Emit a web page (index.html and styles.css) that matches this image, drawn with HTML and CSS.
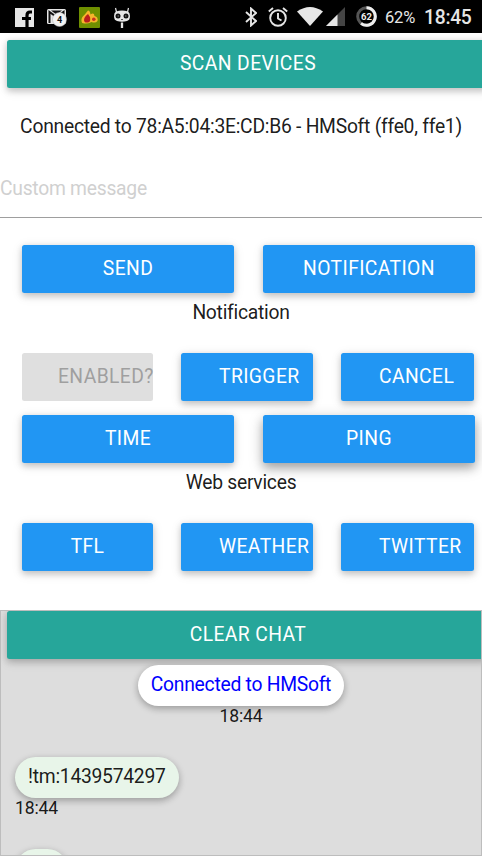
FILE: index.html
```html
<!DOCTYPE html>
<html lang="en">
<head>
<meta charset="utf-8">
<title>BLE messenger</title>
<link rel="stylesheet" href="styles.css">
</head>
<body>
<header class="status">
  <div class="status-left">
    <svg width="19" height="19" viewBox="0 0 19 19"><path fill="#e6e6e6" d="M0 0h19v19H0z"/><path d="M17 4h-2q-3 0-3 3.500V19M7 10.500h9" fill="none" stroke="#000" stroke-width="3.200"/></svg>
    <svg width="20" height="19" viewBox="0 0 20 19"><rect y="1" width="19" height="15" rx="1.500" fill="#e6e6e6"/><path d="M2.500 15V4l7 5 7-5v5" fill="none" stroke="#111" stroke-width="2"/><path d="M4 2.500h11l-5.500 4z" fill="#111"/><circle cx="12.500" cy="11.500" r="7" fill="#f2f2f2" stroke="#aaa" stroke-width=".5"/><text class="mail-count" x="12.500" y="14.500" text-anchor="middle">4</text></svg>
    <svg width="21" height="21" viewBox="0 0 21 21"><rect width="21" height="21" rx="1" fill="#6f8f00"/><path d="M2.500 14C2 10 5 9 9 3.500q2 0 2.500 4Q15 5 15.500 9q4 1 3 5-2 2.500-6 1-4 2-7 1.500-3 0-3-2.500z" fill="#f6b52c"/><path d="M5 13q0-3 4-6l2 3q1 5-2 5.500-4 .5-4-2.500z" fill="#b9201d"/><circle cx="14.800" cy="12.300" r="1.800" fill="#c83220"/></svg>
    <svg width="18" height="21" viewBox="0 0 18 21"><path d="M3.500 5 2.500 1M14.500 5l1-4" stroke="#e6e6e6" stroke-width="1.200"/><path d="M3 4.500q6-2 12 0 2 1 2 4.500 0 4-3 5-5 1.500-10 0-3-1-3-5 0-3.500 2-4.500z" fill="#e6e6e6"/><circle cx="5" cy="9" r="2.500" fill="#111"/><circle cx="13" cy="9" r="2.500" fill="#111"/><circle cx="5.200" cy="9" r=".7" fill="#888"/><circle cx="12.800" cy="9" r=".7" fill="#888"/><path d="M8 12.500h2" stroke="#555"/><path d="M9 15.500V21" stroke="#e6e6e6" stroke-width="2.300"/></svg>
  </div>
  <div class="status-right">
    <svg class="bt" width="12" height="20" viewBox="0 0 12 20"><path d="m1 5 10 9-5 4.500v-17L11 6 1 15" fill="none" stroke="#e6e6e6" stroke-width="1.900"/></svg>
    <svg class="alarm" width="20" height="20" viewBox="0 0 20 20" fill="none" stroke="#e6e6e6" stroke-width="1.900"><circle cx="10" cy="11" r="7.800"/><path d="M10 6v5.500l3.500 2M.8 4.500 5 1M19.200 4.500 15 1"/></svg>
    <svg class="wifi" width="26" height="19" viewBox="0 0 26 19"><path d="M0 4.500Q13-4.500 26 4.500L13 19z" fill="#e6e6e6"/></svg>
    <svg class="signal" width="19" height="19" viewBox="0 0 19 19"><path d="M19 0v19H0z" fill="#444"/><path d="M11.500 7.500V19H0z" fill="#e6e6e6"/></svg>
    <svg class="battery" width="21" height="21" viewBox="0 0 21 21"><circle cx="10.500" cy="10.500" r="8.800" fill="none" stroke="#555" stroke-width="3"/><path d="M10.500 1.700a8.800 8.800 0 1 1-5.500 15.700" fill="none" stroke="#eee" stroke-width="3"/><text class="battery-count" x="10.500" y="14" text-anchor="middle">62</text></svg>
    <span class="percent">62%</span>
    <span class="clock">18:45</span>
  </div>
</header>
<main>
  <button class="btn teal scan">SCAN DEVICES</button>
  <p class="connection">Connected to 78:A5:04:3E:CD:B6 - HMSoft (ffe0, ffe1)</p>
  <input class="message" type="text" placeholder="Custom message">
  <div class="row two first"><button class="btn">SEND</button><button class="btn">NOTIFICATION</button></div>
  <p class="heading">Notification</p>
  <div class="row three"><button class="btn padded disabled" disabled>ENABLED?</button><button class="btn padded">TRIGGER</button><button class="btn padded">CANCEL</button></div>
  <div class="row two second"><button class="btn">TIME</button><button class="btn raised">PING</button></div>
  <p class="heading">Web services</p>
  <div class="row three"><button class="btn">TFL</button><button class="btn padded">WEATHER</button><button class="btn padded">TWITTER</button></div>
</main>
<section class="chat">
  <button class="btn teal">CLEAR CHAT</button>
  <div class="entry system"><div class="bubble">Connected to HMSoft</div><time>18:44</time></div>
  <div class="entry"><div class="bubble">!tm:1439574297</div><time>18:44</time></div>
  <div class="entry"><div class="bubble short"></div></div>
</section>
</body>
</html>
```
FILE: styles.css
```css
* { box-sizing: border-box; }
body {
  margin: 0;
  height: 856px;
  overflow: hidden;
  display: flex;
  flex-direction: column;
  background: #fff;
  color: rgba(0, 0, 0, .9);
  font: 19.3px/28px Roboto, sans-serif;
  letter-spacing: -.26px;
}
p { margin: 0; }
svg { display: block; flex: none; }
.status {
  height: 33px;
  flex: none;
  display: flex;
  justify-content: space-between;
  background: #000;
  color: #e6e6e6;
  letter-spacing: 0;
}
.status-left { display: flex; align-items: center; gap: 12.500px; padding: 1px 0 0 15px; }
.status-right { display: flex; align-items: center; padding-right: 10.500px; }
.mail-count { font: bold 9px Roboto, sans-serif; fill: #111; }
.battery-count { font: bold 9.5px Roboto, sans-serif; fill: #eee; }
.alarm { margin-left: 11px; }
.wifi { margin-left: 9px; }
.signal { margin-left: 3px; }
.battery { margin-left: 11px; }
.percent { margin-left: 8px; font-size: 16.5px; letter-spacing: -.2px; padding-top: 2px; }
.clock { margin-left: 9px; font-size: 19.3px; letter-spacing: -.3px; font-weight: 500; padding-top: 2px; }
main { height: 577px; flex: none; padding-top: 7px; }
.btn {
  display: block;
  height: 48px;
  min-width: 0;
  padding: 0;
  border: 0;
  border-radius: 2.500px;
  background: #2196f3;
  color: #fff;
  font: 19.3px/46px Roboto, sans-serif;
  letter-spacing: .4px;
  white-space: nowrap;
  text-align: center;
  box-shadow: 0 2.500px 6px rgba(0, 0, 0, .18), 0 2.500px 12px rgba(0, 0, 0, .1);
}
.btn.teal { width: 482px; margin-left: 7px; background: #26a69a; }
.btn.padded { padding-left: 38px; text-align: left; }
.btn.disabled { padding-left: 36px; background: #dfdfdf; color: #9f9f9f; box-shadow: none; }
.btn.raised { box-shadow: 0 5px 10px rgba(0, 0, 0, .25), 0 4px 16px rgba(0, 0, 0, .18); }
.connection { margin-top: 24px; padding-top: 1px; text-align: center; white-space: nowrap; }
.message {
  display: block;
  width: 100%;
  height: 60px;
  margin-top: 17px;
  padding: 1px 0 0;
  border: 0;
  border-bottom: 1px solid #9e9e9e;
  outline: 0;
  background: transparent;
  font: inherit;
  letter-spacing: inherit;
}
.message::placeholder { color: #d0d0d0; opacity: 1; }
.row { display: grid; padding-left: 22px; }
.two { grid-template-columns: 212px 212px; column-gap: 29px; }
.three { grid-template-columns: 131px 132px 133px; column-gap: 28px; }
.first { margin-top: 27px; }
.second { margin-top: 14px; }
.heading { height: 60px; padding-top: 6px; text-align: center; }
.chat {
  flex: 1;
  min-height: 0;
  overflow: hidden;
  border: 1px solid #bdbdbd;
  background: #ddd;
}
.chat .teal { margin-left: 6px; }
.entry {
  display: flex;
  flex-direction: column;
  align-items: flex-start;
  height: 92px;
  padding-left: 14px;
}
.system { align-items: center; margin-top: 6px; padding-left: 0; }
.bubble {
  height: 41px;
  padding: 6px 13px 4px;
  border-radius: 21px;
  background: #e8f5e9;
  box-shadow: 0 2.500px 6px rgba(0, 0, 0, .22), 0 2.500px 10px rgba(0, 0, 0, .1);
}
.system .bubble { background: #fff; color: #00f; }
.short { width: 53px; }
time { font-size: 17.6px; line-height: 20px; letter-spacing: -.15px; }
```
